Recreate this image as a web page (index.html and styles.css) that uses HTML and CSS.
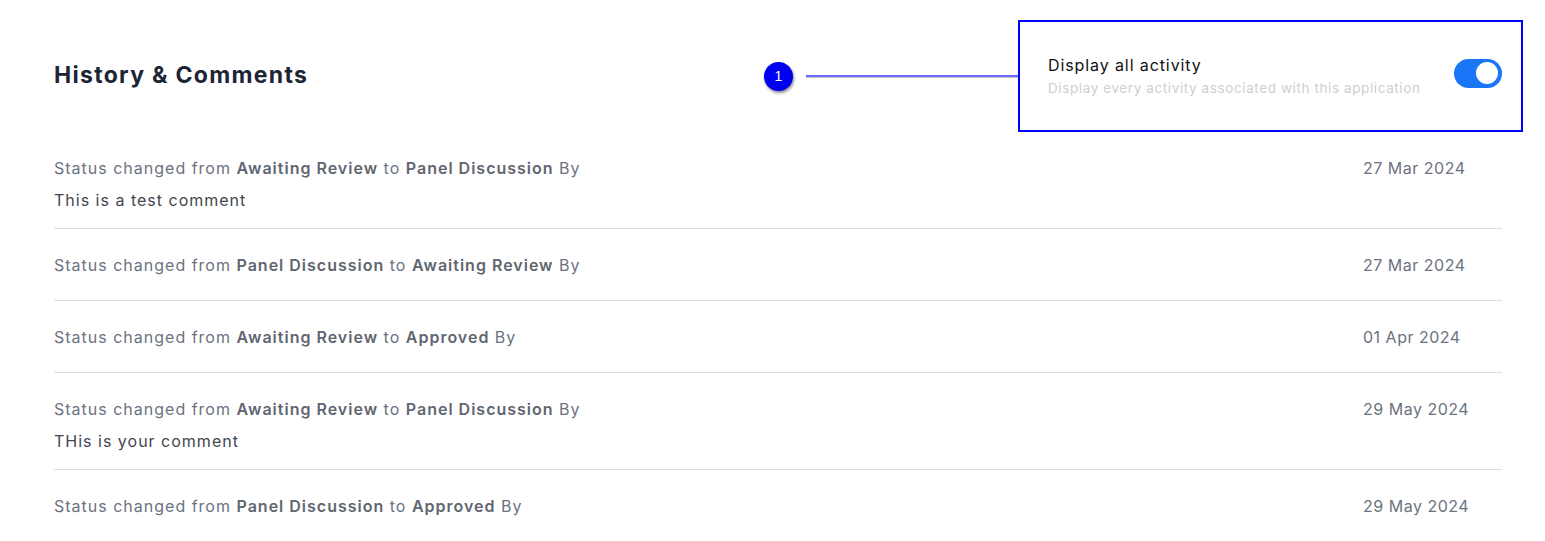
FILE: index.html
```html
<!DOCTYPE html>
<html lang="en">
<head>
<meta charset="utf-8">
<title>History &amp; Comments</title>
<link rel="stylesheet" href="styles.css">
</head>
<body>
<main class="page">
  <header class="header">
    <h2 class="title">History &amp; Comments</h2>
    <div class="panel">
      <div class="panel-text">
        <div class="panel-label">Display all activity</div>
        <div class="panel-sub">Display every activity associated with this application</div>
      </div>
      <span class="toggle" role="switch" aria-checked="true"><span class="knob"></span></span>
      <div class="annot-box">
        <span class="annot-line"></span>
        <span class="annot-badge">1</span>
      </div>
    </div>
  </header>
  <ul class="list">
    <li class="row">
      <div class="row-main">
        <div class="status">Status changed from <b>Awaiting Review</b> to <b>Panel Discussion</b> By</div>
        <div class="comment">This is a test comment</div>
      </div>
      <div class="date">27 Mar 2024</div>
    </li>
    <li class="row">
      <div class="row-main">
        <div class="status">Status changed from <b>Panel Discussion</b> to <b>Awaiting Review</b> By</div>
      </div>
      <div class="date">27 Mar 2024</div>
    </li>
    <li class="row">
      <div class="row-main">
        <div class="status">Status changed from <b>Awaiting Review</b> to <b>Approved</b> By</div>
      </div>
      <div class="date">01 Apr 2024</div>
    </li>
    <li class="row">
      <div class="row-main">
        <div class="status">Status changed from <b>Awaiting Review</b> to <b>Panel Discussion</b> By</div>
        <div class="comment">THis is your comment</div>
      </div>
      <div class="date">29 May 2024</div>
    </li>
    <li class="row">
      <div class="row-main">
        <div class="status">Status changed from <b>Panel Discussion</b> to <b>Approved</b> By</div>
      </div>
      <div class="date">29 May 2024</div>
    </li>
  </ul>
</main>
</body>
</html>
```
FILE: styles.css
```css
* { box-sizing: border-box; }
html, body { margin: 0; padding: 0; background: #ffffff; }
body {
  font-family: Inter, "Open Sans", "Liberation Sans", sans-serif;
  color: #6b7280;
  font-size: 16px;
}
.page {
  padding: 20px 43px 0 54px;
}
.header {
  display: flex;
  justify-content: space-between;
  align-items: center;
  height: 112px;
}
.title {
  margin: 0 0 2px;
  font-size: 23px;
  font-weight: 700;
  color: #1b2536;
  letter-spacing: 1.3px;
}
.panel {
  position: relative;
  align-self: stretch;
  display: flex;
  align-items: center;
  gap: 30px;
  width: 454px;
  justify-content: space-between;
}
.panel-text { display: flex; flex-direction: column; }
.panel-label {
  font-size: 16px;
  line-height: 22px;
  color: #111111;
  letter-spacing: 0.9px;
}
.panel-sub {
  font-size: 13.5px;
  line-height: 20px;
  color: #cccfd4;
  margin-top: 2px;
  letter-spacing: 0.6px;
}
.toggle {
  width: 48px;
  height: 29px;
  border-radius: 15px;
  background: #1a75f7;
  display: flex;
  align-items: center;
  justify-content: flex-end;
  padding-right: 4px;
  margin-top: -6px;
}
.knob {
  width: 22px;
  height: 22px;
  border-radius: 50%;
  background: #ffffff;
}
.annot-box {
  position: absolute;
  top: 0;
  bottom: 0;
  left: -30px;
  right: -21px;
  border: 2px solid #0000ff;
}
.annot-line {
  position: absolute;
  top: 53px;
  left: -214px;
  width: 212px;
  height: 2px;
  background: #6a6aff;
  box-shadow: 0 1px 1px rgba(0,0,0,0.25);
}
.annot-badge {
  position: absolute;
  top: 40px;
  left: -256px;
  width: 29px;
  height: 29px;
  border-radius: 50%;
  background: #0000f0;
  color: #ffffff;
  font-family: "Liberation Sans", sans-serif;
  font-size: 14px;
  line-height: 29px;
  text-align: center;
  box-shadow: 1px 2px 3px rgba(0,0,0,0.45);
}
.list {
  list-style: none;
  margin: 0;
  padding: 0;
}
.row {
  display: flex;
  justify-content: space-between;
  padding: 24px 0 17px;
  border-bottom: 1px solid #dedede;
}
.row:last-child { border-bottom: none; }
.row-main { display: flex; flex-direction: column; }
.status {
  line-height: 24px;
  padding-bottom: 6px;
  color: #6b7280;
  letter-spacing: 1px;
}
.status b { font-weight: 600; color: #5f6670; }
.comment {
  line-height: 24px;
  margin-top: 2px;
  margin-bottom: -1px;
  color: #3f4650;
  letter-spacing: 1px;
}
.date {
  width: 139px;
  line-height: 24px;
  color: #6b7280;
  letter-spacing: 0.5px;
}
```
